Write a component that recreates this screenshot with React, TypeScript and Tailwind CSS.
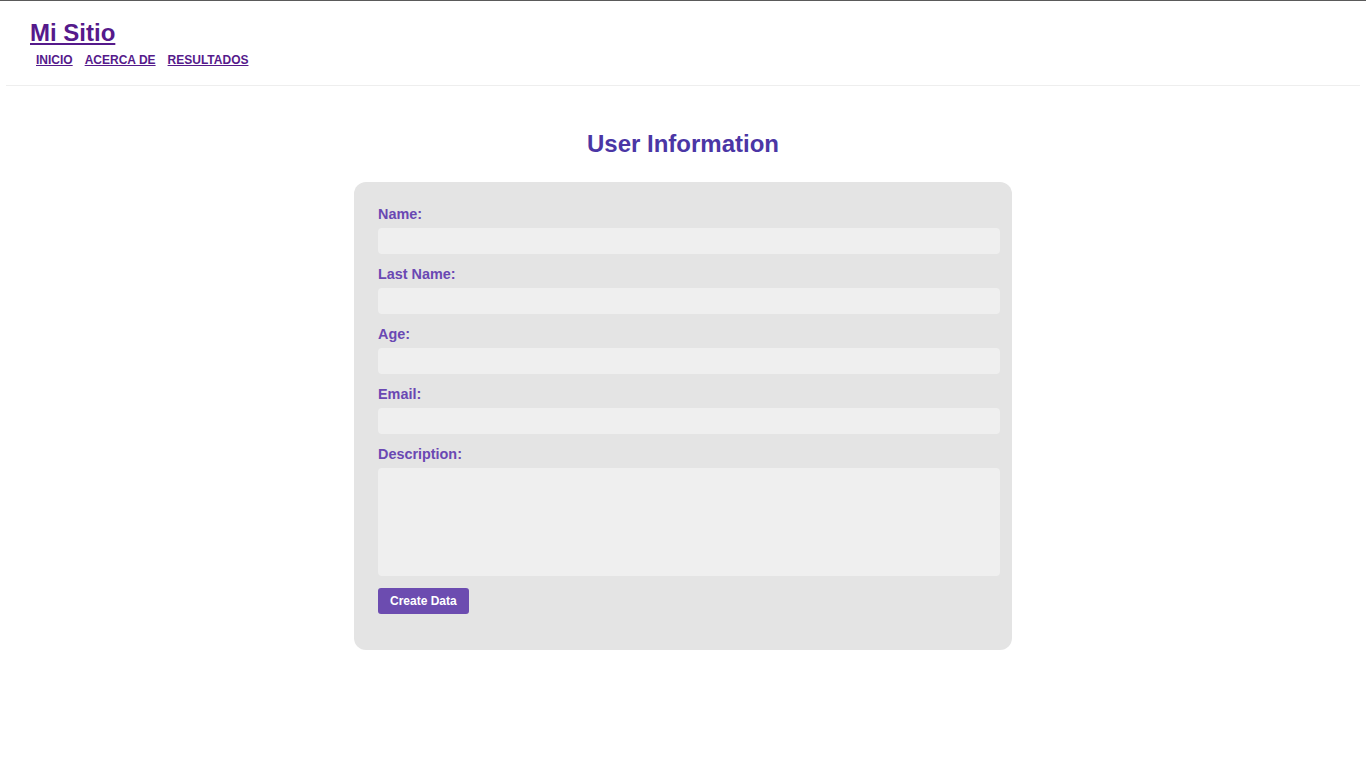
const fields = ['Name:', 'Last Name:', 'Age:', 'Email:']

export default function App() {
  return (
    <div className="min-h-screen bg-white border-t border-[#5a5a5a] font-['Liberation_Sans',Arial,sans-serif]">
      <header className="mx-1.5 px-6 pt-[18px] pb-[17px] border-b border-[#eeeeee]">
        <a href="#" className="block w-fit text-2xl leading-[28px] font-bold text-[#551a8b] underline">
          Mi Sitio
        </a>
        <nav className="mt-[5px] flex">
          {['INICIO', 'ACERCA DE', 'RESULTADOS'].map((link) => (
            <a key={link} href="#" className="mx-1.5 text-xs leading-4 font-bold text-[#551a8b] underline">
              {link}
            </a>
          ))}
        </nav>
      </header>

      <main>
        <h2 className="mt-[44px] mb-6 text-center text-2xl leading-[28px] font-bold text-[#4b36a5]">
          User Information
        </h2>

        <form className="mx-auto w-[658px] bg-[#e4e4e4] rounded-xl pl-6 pr-3 pt-6 pb-9">
          {fields.map((label) => (
            <div key={label} className="mb-3">
              <label className="block mb-[5px] text-[14.4px] leading-[17px] font-bold text-[#6a48b3]">{label}</label>
              <input type="text" className="block w-full h-[26px] rounded bg-[#efefef] outline-none px-1.5" />
            </div>
          ))}
          <div className="mb-3">
            <label className="block mb-[5px] text-[14.4px] leading-[17px] font-bold text-[#6a48b3]">Description:</label>
            <textarea className="block w-full h-[108px] rounded bg-[#efefef] outline-none resize-none px-1.5" />
          </div>
          <button type="button" className="h-[26px] px-3 rounded-[3px] bg-[#6c4cb0] text-white text-xs font-bold">
            Create Data
          </button>
        </form>
      </main>
    </div>
  )
}
